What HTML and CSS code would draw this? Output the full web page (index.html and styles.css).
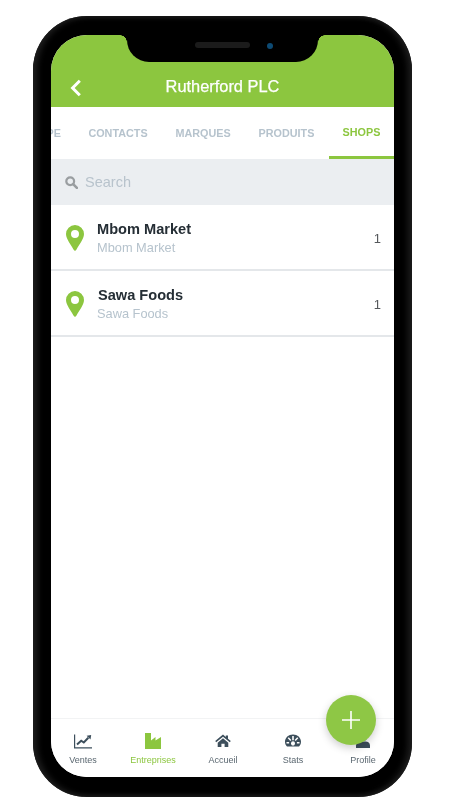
FILE: index.html
```html
<!DOCTYPE html>
<html lang="fr">
<head>
<meta charset="utf-8">
<title>Rutherford PLC</title>
<link rel="stylesheet" href="styles.css">
</head>
<body>
<div class="phone">
  <div class="notch"><span class="speaker"></span><span class="camera"></span></div>
  <div class="screen">
    <header class="topbar">
      <svg class="back" viewBox="0 0 12 18" width="12" height="18"><path d="M9.800 1.800 2.600 9l7.200 7.200" fill="none" stroke="#fff" stroke-width="3"/></svg>
      <h1 class="title">Rutherford PLC</h1>
    </header>
    <nav class="tabs">
      <span class="tab tab-cut">PE</span>
      <span class="tab tab-contacts">CONTACTS</span>
      <span class="tab tab-marques">MARQUES</span>
      <span class="tab tab-produits">PRODUITS</span>
      <span class="tab tab-active">SHOPS</span>
    </nav>
    <div class="search">
      <svg class="search-icon" viewBox="0 0 14 14" width="13" height="13"><circle cx="5.600" cy="5.600" r="4.200" fill="none" stroke="#9a9ea1" stroke-width="2.400"/><path d="m8.800 8.800 4 4" stroke="#9a9ea1" stroke-width="2.800" stroke-linecap="round"/></svg>
      <span class="search-text">Search</span>
    </div>
    <ul class="list">
      <li class="row">
        <svg class="pin" viewBox="0 0 18 26" width="18" height="26"><path fill-rule="evenodd" d="M9 0a9 9 0 0 1 9 9c0 5-5.500 11.500-7.800 16a1.300 1.300 0 0 1-2.400 0C5.500 20.500 0 14 0 9a9 9 0 0 1 9-9Zm0 5a4 4 0 1 0 0 8 4 4 0 0 0 0-8Z" fill="#8cc63f"/></svg>
        <div class="row-text">
          <div class="row-name">Mbom Market</div>
          <div class="row-sub">Mbom Market</div>
        </div>
        <span class="row-count">1</span>
      </li>
      <li class="row">
        <svg class="pin" viewBox="0 0 18 26" width="18" height="26"><path fill-rule="evenodd" d="M9 0a9 9 0 0 1 9 9c0 5-5.500 11.500-7.800 16a1.300 1.300 0 0 1-2.400 0C5.500 20.500 0 14 0 9a9 9 0 0 1 9-9Zm0 5a4 4 0 1 0 0 8 4 4 0 0 0 0-8Z" fill="#8cc63f"/></svg>
        <div class="row-text">
          <div class="row-name row-name-shift">Sawa Foods</div>
          <div class="row-sub">Sawa Foods</div>
        </div>
        <span class="row-count">1</span>
      </li>
    </ul>
    <footer class="bottom">
      <div class="nav-item">
        <svg viewBox="0 0 18 16" width="18" height="16"><path d="M.6 1.500v13.300h17.400" fill="none" stroke="#3d4f5c" stroke-width="1.200"/><path d="m3 11.500 4.200-3.800 2.600 1.800 4.500-4.800" fill="none" stroke="#3d4f5c" stroke-width="2"/><path d="m12.600 2.800 4.600-.8-.7 4.600Z" fill="#3d4f5c"/></svg>
        <span>Ventes</span>
      </div>
      <div class="nav-item nav-active">
        <svg viewBox="0 0 16 16" width="16" height="16"><path d="M0 0h6v7.500l4.500-3.500v3.500L16 4v12H0Z" fill="#8cc63f"/></svg>
        <span>Entreprises</span>
      </div>
      <div class="nav-item">
        <svg viewBox="0 0 16 16" width="16" height="16"><path d="M8 1.500.2 8l1 1.300L8 3.800l6.800 5.500 1-1.300L13 5.700V2.500h-2.200v1.400Z" fill="#3d4f5c"/><path d="M2.700 9.700 8 5.300l5.300 4.400V14H9.600v-3.200H6.400V14H2.700Z" fill="#3d4f5c"/></svg>
        <span>Accueil</span>
      </div>
      <div class="nav-item">
        <svg viewBox="0 0 16 16" width="16" height="16"><path fill-rule="evenodd" d="M8 1.500c4.500 0 8 3.200 8 7.200 0 1.900-.8 3.600-2 4.800H2c-1.200-1.200-2-2.900-2-4.800 0-4 3.500-7.200 8-7.200ZM7.200 3v4.200h1.600V3Zm-3.400 1.200-1.100 1 2.600 2.900 1.100-1Zm8.400 0L9.600 7.100l1.100 1 2.600-2.900ZM1.500 9v1.500h2.600V9Zm10.400 0v1.500h2.600V9ZM8 8.300a2 2 0 0 0-2 2c0 1 .5 1.700 1 2.200h2c.5-.5 1-1.200 1-2.200a2 2 0 0 0-2-2Z" fill="#3d4f5c"/></svg>
        <span>Stats</span>
      </div>
      <div class="nav-item">
        <svg viewBox="0 0 16 16" width="16" height="16"><circle cx="8" cy="4" r="4" fill="#3d4f5c"/><path d="M1 15v-2.500c0-2.500 2-4 4.500-4h5c2.500 0 4.500 1.500 4.500 4V15Z" fill="#3d4f5c"/></svg>
        <span>Profile</span>
      </div>
    </footer>
    <div class="fab"><svg viewBox="0 0 20 20" width="20" height="20"><path d="M10 1v18M1 10h18" stroke="#fff" stroke-width="1.600"/></svg></div>
  </div>
</div>
</body>
</html>
```
FILE: styles.css
```css
* { box-sizing: border-box; }
html, body { margin: 0; padding: 0; background: #fff; }
body { width: 450px; height: 800px; overflow: hidden; font-family: "Liberation Sans", Arial, sans-serif; }

.phone {
  position: relative;
  width: 379px;
  height: 781px;
  margin: 16px 0 0 33px;
  padding: 19px 18px 20px;
  background: #000;
  border-radius: 54px;
  box-shadow: inset 4px 0 6px #1f1f1f, inset -4px 0 6px #1f1f1f;
  filter: blur(.35px);
}
.notch {
  position: absolute;
  z-index: 3;
  top: 10px;
  left: 94px;
  width: 191px;
  height: 36px;
  background: #000;
  border-radius: 0 0 22px 22px;
}
.notch::before,
.notch::after {
  content: "";
  position: absolute;
  top: 9px;
  width: 7px;
  height: 7px;
}
.notch::before {
  left: -7px;
  background: radial-gradient(circle at 0 100%, transparent 6.500px, #000 7px);
}
.notch::after {
  right: -7px;
  background: radial-gradient(circle at 100% 100%, transparent 6.500px, #000 7px);
}
.speaker {
  position: absolute;
  left: 68px;
  top: 16px;
  width: 55px;
  height: 6px;
  border-radius: 3px;
  background: #1b1b1b;
}
.camera {
  position: absolute;
  left: 140px;
  top: 17px;
  width: 6px;
  height: 6px;
  border-radius: 50%;
  background: #0d4a73;
}
.screen {
  position: relative;
  display: flex;
  flex-direction: column;
  height: 742px;
  overflow: hidden;
  background: #fff;
  border-radius: 36px;
}
.topbar {
  flex: none;
  height: 72px;
  padding: 32px 0 0 19px;
  display: flex;
  align-items: center;
  position: relative;
  background: #8cc63f;
}
.back { flex: none; margin-top: 2px; }
.title {
  position: absolute;
  left: 0;
  right: 0;
  top: 41px;
  margin: 0;
  text-align: center;
  color: #fff;
  font-size: 16.400px;
  line-height: 20px;
  font-weight: 400;
  -webkit-text-stroke: .25px #fff;
}
.tabs {
  flex: none;
  height: 52px;
  display: flex;
  align-items: stretch;
  background: #fff;
}
.tab {
  flex: none;
  display: flex;
  align-items: center;
  justify-content: center;
  height: 52px;
  font-size: 10.800px;
  font-weight: 700;
  color: #b6c3cd;
}
.tab-cut { width: 10px; overflow: hidden; justify-content: flex-end; }
.tab-contacts { margin-left: 27px; width: 60px; }
.tab-marques { margin-left: 27px; width: 56px; }
.tab-produits { margin-left: 27px; width: 57px; }
.tab-active {
  margin-left: 14px;
  width: 65px;
  color: #8cc63f;
  border-bottom: 3px solid #8cc63f;
}
.search {
  flex: none;
  height: 46px;
  display: flex;
  align-items: center;
  gap: 7px;
  padding-left: 14px;
  background: #ebeef1;
}
.search-text { font-size: 14.500px; color: #b8c3cc; }
.list { flex: none; margin: 0; padding: 0; list-style: none; }
.row {
  height: 66px;
  display: flex;
  align-items: center;
  padding: 1px 13px 0 15px;
  border-bottom: 2px solid #e4e7ea;
}
.pin { flex: none; margin-right: 13px; }
.row-text { flex: 1; min-width: 0; padding-top: 2px; }
.row-name {
  font-size: 14.600px;
  line-height: 18px;
  font-weight: 700;
  color: #252e35;
}
.row-name-shift { margin-left: 1px; }
.row-sub {
  font-size: 12.800px;
  line-height: 18px;
  margin-top: 1px;
  color: #b6c3cd;
}
.row-count { font-size: 13px; color: #55595c; padding-top: 2px; }
.bottom {
  margin: auto -4px 0 -3px;
  height: 59px;
  display: flex;
  padding-top: 14px;
  border-top: 1px solid #f2f3f4;
  background: #fff;
}
.nav-item {
  flex: 1;
  min-width: 0;
  display: flex;
  flex-direction: column;
  align-items: center;
  gap: 6px;
  color: #5a6770;
  font-size: 9px;
  line-height: 11px;
}
.nav-item svg { flex: none; }
.nav-active { color: #8cc63f; }
.fab {
  position: absolute;
  right: 18px;
  bottom: 32px;
  width: 50px;
  height: 50px;
  display: flex;
  align-items: center;
  justify-content: center;
  border-radius: 50%;
  background: #8ec745;
  box-shadow: 0 3px 8px rgba(0, 0, 0, .2);
}
```
